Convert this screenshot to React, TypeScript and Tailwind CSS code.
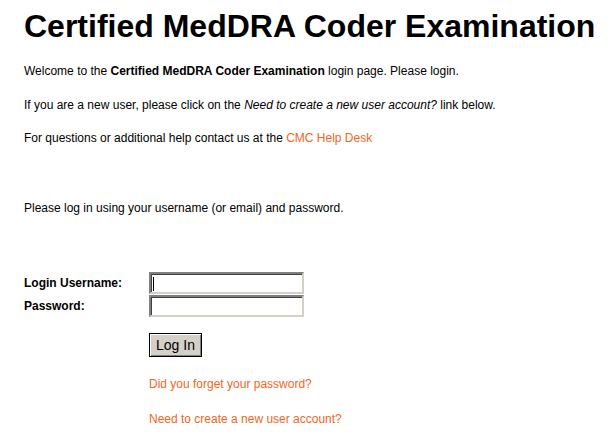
const FIELDS = [
  { label: "Login Username:", type: "text", focused: true },
  { label: "Password:", type: "password", focused: false },
];

export default function App() {
  return (
    <div className="min-h-screen bg-white px-6 pt-2 font-['Liberation_Sans',Arial,sans-serif] text-[12px] leading-[15px] text-black">
      <h1 className="whitespace-nowrap text-[32px] font-bold leading-[37px]">Certified MedDRA Coder Examination</h1>

      <p className="mt-[19px]">
        Welcome to the <b>Certified MedDRA Coder Examination</b> login page. Please login.
      </p>
      <p className="mt-[19px]">
        If you are a new user, please click on the <i>Need to create a new user account?</i> link below.
      </p>
      <p className="mt-[18px]">
        For questions or additional help contact us at the{" "}
        <a href="#" className="text-[#f26522]">
          CMC Help Desk
        </a>
      </p>

      <p className="mt-[55px]">Please log in using your username (or email) and password.</p>

      <form className="mt-[56px]" onSubmit={(e) => e.preventDefault()}>
        <div className="flex flex-col gap-[1px]">
          {FIELDS.map((f) => (
            <div key={f.label} className="flex items-center">
              <label className="w-[125px] font-bold">{f.label}</label>
              <div className="relative h-[22px] w-[155px] border-2 border-t-[#808080] border-l-[#808080] border-r-[#d4d0c8] border-b-[#d4d0c8] bg-white">
                <div className="h-full w-full border-t border-l border-t-[#404040] border-l-[#404040]">
                  <input type={f.type} className="h-full w-full bg-transparent px-[2px] outline-none" />
                </div>
                {f.focused && <span className="absolute left-[2px] top-[3px] h-[14px] w-[1px] bg-black" />}
              </div>
            </div>
          ))}
        </div>

        <div className="ml-[125px] mt-[16px]">
          <button
            type="submit"
            className="h-[24px] w-[53px] border border-black bg-[#d4d0c8] text-[14px] leading-none shadow-[inset_1px_1px_0_#ffffff,inset_-1px_-1px_0_#808080]"
          >
            Log In
          </button>
        </div>

        <div className="ml-[125px] mt-[20px] flex flex-col gap-[20px] text-[#f26522]">
          <a href="#">Did you forget your password?</a>
          <a href="#">Need to create a new user account?</a>
        </div>
      </form>
    </div>
  );
}
